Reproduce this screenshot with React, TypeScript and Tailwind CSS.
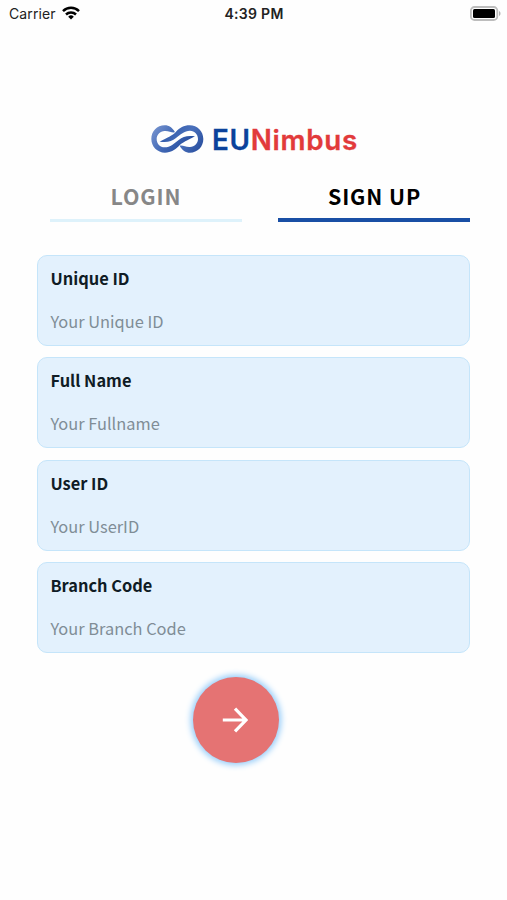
import { useState } from 'react'

const fields = [
  { id: 'uniqueId', label: 'Unique ID', placeholder: 'Your Unique ID' },
  { id: 'fullName', label: 'Full Name', placeholder: 'Your Fullname' },
  { id: 'userId', label: 'User ID', placeholder: 'Your UserID' },
  { id: 'branchCode', label: 'Branch Code', placeholder: 'Your Branch Code' },
]

function StatusBar() {
  return (
    <div className="grid h-7 grid-cols-3 items-center pl-[9px] pr-[6px] font-['Inter',sans-serif] text-[14px] leading-none text-[#222]">
      <div className="flex items-center gap-[6px]">
        <span className="tracking-[0.1px]">Carrier</span>
        <svg className="-mt-[2px] h-[14px] w-[18px]" viewBox="0 0 18 14" fill="none" stroke="#000" strokeWidth="2.5">
          <path d="M1 5.1a11.5 11.5 0 0 1 16 0" />
          <path d="M4 8.5a7.2 7.2 0 0 1 10 0" />
          <path d="M9 13.5 6.2 10.7a4 4 0 0 1 5.6 0z" fill="#000" stroke="none" />
        </svg>
      </div>
      <span className="-ml-[2px] text-center font-semibold tracking-[0.3px]">4:39 PM</span>
      <svg className="-mt-[2px] h-[15px] w-[31px] justify-self-end" viewBox="0 0 31 15">
        <rect x="0.9" y="1" width="26.4" height="13" rx="3.6" fill="#fff" stroke="#bdbdbd" strokeWidth="1.8" />
        <rect x="3" y="3" width="22" height="9" rx="1.5" fill="#000" />
        <path d="M29 5v5c2-.8 2-4.2 0-5z" fill="#b4b4b4" />
      </svg>
    </div>
  )
}

const loopPath =
  'M90 41C82 27 73 20 59 20C36 20 19 38 19 61C19 84 37 102 60 102C78 102 90 94 101 83C112 71 127 66 150 53C128 50 114 53 101 64C88 74 76 86 59 86C45 86 35 75 35 61C35 48 45 38 59 37C71 36 80 43 90 41Z'

function Logo() {
  return (
    <div className="flex items-center justify-center gap-[8px] pl-[2px]">
      <svg className="-mt-[2px] h-[28px] w-[53px]" viewBox="18 19 159 84">
        <defs>
          <linearGradient id="loop" x1="20" y1="20" x2="130" y2="100" gradientUnits="userSpaceOnUse">
            <stop offset="0" stopColor="#7c98d2" />
            <stop offset="0.5" stopColor="#4168b5" />
            <stop offset="1" stopColor="#23499a" />
          </linearGradient>
          <linearGradient id="loopBack" x1="20" y1="20" x2="130" y2="100" gradientUnits="userSpaceOnUse">
            <stop offset="0" stopColor="#23499a" />
            <stop offset="0.5" stopColor="#4a70bb" />
            <stop offset="1" stopColor="#3059a9" />
          </linearGradient>
        </defs>
        <path d={loopPath} fill="url(#loop)" />
        <path d={loopPath} fill="url(#loopBack)" transform="rotate(180 97 61)" />
      </svg>
      <h1 className="pt-[1px] font-['Inter',sans-serif] text-[27.8px] font-semibold leading-[33px] tracking-[0.7px] text-[#e23a3b] [-webkit-text-stroke:0.3px]">
        <span className="text-[#0b429b]">EU</span>Nimbus
      </h1>
    </div>
  )
}

function App() {
  const [tab, setTab] = useState('signup')

  return (
    <div className="min-h-screen bg-[#fefefe] font-['Noto_Sans_CJK_SC',sans-serif]">
      <StatusBar />
      <main className="px-[37px] pt-[95px]">
        <Logo />
        <div className="mt-[19px] flex justify-between pl-[13px] text-[21.4px] font-bold leading-[36px] tracking-[0.9px]">
          <button
            onClick={() => setTab('login')}
            className={
              tab === 'login'
                ? 'h-[46px] w-[192px] border-b-4 border-[#194fa5] pb-[3px] text-black'
                : 'h-[46px] w-[192px] border-b-[3px] border-[#def2fb] pb-[4px] text-[#878787]'
            }
          >
            LOGIN
          </button>
          <button
            onClick={() => setTab('signup')}
            className={
              tab === 'signup'
                ? 'h-[46px] w-[192px] border-b-4 border-[#194fa5] pb-[3px] pl-[1px] text-black'
                : 'h-[46px] w-[192px] border-b-[3px] border-[#def2fb] pb-[4px] text-[#878787]'
            }
          >
            SIGN UP
          </button>
        </div>
        <form className="mt-[32.5px] flex flex-col gap-[11.5px]">
          {fields.map((field) => (
            <label
              key={field.id}
              className="flex h-[91px] flex-col rounded-[10px] border border-[#c5e5fa] bg-[#e3f1fd] px-[12.4px] pt-[9px]"
            >
              <span className="text-[16.4px] font-bold leading-[26px] text-[#101c25]">{field.label}</span>
              <input
                name={field.id}
                placeholder={field.placeholder}
                className="mt-[17px] h-[26px] bg-transparent text-[16.4px] leading-[26px] outline-none placeholder:text-[#808d96]"
              />
            </label>
          ))}
        </form>
        <button className="ml-[156px] mt-[23.5px] flex size-[86px] items-center justify-center rounded-full bg-[#e57373] shadow-[0_0_6px_2px_#90caf9]">
          <svg className="-ml-[2px] size-[26px]" viewBox="0 0 26 26" fill="none" stroke="#fff" strokeWidth="3.2">
            <path d="M.8 13H24M13 1.6 24 13 13 24.4" />
          </svg>
        </button>
      </main>
    </div>
  )
}

export default App
